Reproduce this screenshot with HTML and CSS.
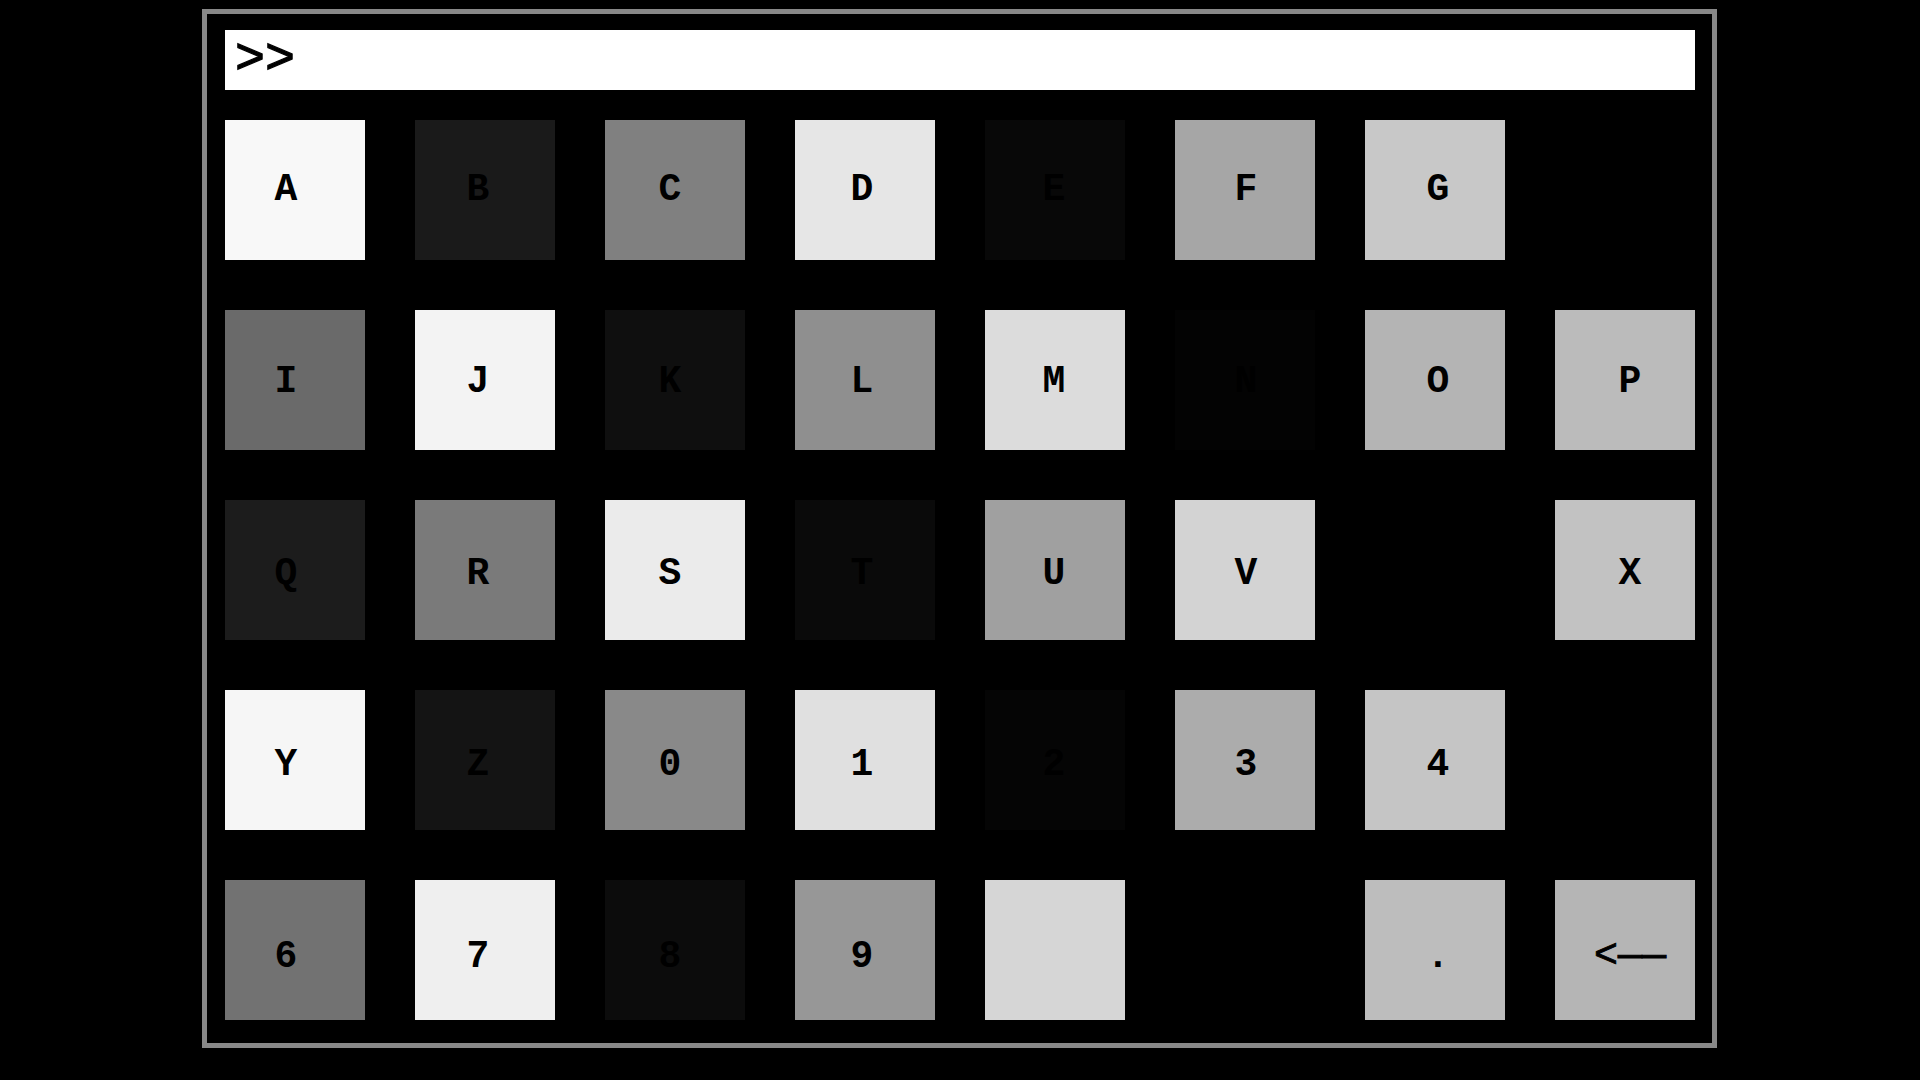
FILE: index.html
```html
<!DOCTYPE html>
<html lang="en">
<head>
<meta charset="utf-8">
<title>Keypad</title>
<link rel="stylesheet" href="styles.css">
</head>
<body>
<main class="frame">
  <div class="display"><span class="prompt">&gt;&gt;</span></div>
  <div class="pad">
    <div class="row">
      <div class="key g-f8"><span class="lbl">A</span></div>
      <div class="key g-1a"><span class="lbl">B</span></div>
      <div class="key g-80"><span class="lbl">C</span></div>
      <div class="key g-e6"><span class="lbl">D</span></div>
      <div class="key g-08"><span class="lbl">E</span></div>
      <div class="key g-a6"><span class="lbl">F</span></div>
      <div class="key g-c8"><span class="lbl">G</span></div>
      <div class="key g-00"><span class="lbl"></span></div>
    </div>
    <div class="row">
      <div class="key g-6a"><span class="lbl">I</span></div>
      <div class="key g-f3"><span class="lbl">J</span></div>
      <div class="key g-0f"><span class="lbl">K</span></div>
      <div class="key g-8f"><span class="lbl">L</span></div>
      <div class="key g-dc"><span class="lbl">M</span></div>
      <div class="key g-03"><span class="lbl">N</span></div>
      <div class="key g-b4"><span class="lbl">O</span></div>
      <div class="key g-bb"><span class="lbl">P</span></div>
    </div>
    <div class="row">
      <div class="key g-1c"><span class="lbl">Q</span></div>
      <div class="key g-7a"><span class="lbl">R</span></div>
      <div class="key g-eb"><span class="lbl">S</span></div>
      <div class="key g-0a"><span class="lbl">T</span></div>
      <div class="key g-a0"><span class="lbl">U</span></div>
      <div class="key g-d3"><span class="lbl">V</span></div>
      <div class="key g-00"><span class="lbl"></span></div>
      <div class="key g-c2"><span class="lbl">X</span></div>
    </div>
    <div class="row">
      <div class="key g-f6"><span class="lbl">Y</span></div>
      <div class="key g-14"><span class="lbl">Z</span></div>
      <div class="key g-89"><span class="lbl">0</span></div>
      <div class="key g-e0"><span class="lbl">1</span></div>
      <div class="key g-05"><span class="lbl">2</span></div>
      <div class="key g-ac"><span class="lbl">3</span></div>
      <div class="key g-c5"><span class="lbl">4</span></div>
      <div class="key g-00"><span class="lbl"></span></div>
    </div>
    <div class="row">
      <div class="key g-72"><span class="lbl">6</span></div>
      <div class="key g-ef"><span class="lbl">7</span></div>
      <div class="key g-0c"><span class="lbl">8</span></div>
      <div class="key g-97"><span class="lbl">9</span></div>
      <div class="key g-d6"><span class="lbl"></span></div>
      <div class="key g-00"><span class="lbl"></span></div>
      <div class="key g-bd"><span class="lbl">.</span></div>
      <div class="key g-b5"><span class="lbl lbl-back">&lt;&mdash;&mdash;</span></div>
    </div>
  </div>
</main>
</body>
</html>
```
FILE: styles.css
```css
html, body {
  margin: 0;
  padding: 0;
  background: #000;
}

body {
  width: 1920px;
  height: 1080px;
  overflow: hidden;
  font-family: "Courier New", "Nimbus Mono PS", "FreeMono", "Liberation Mono", monospace;
}

.frame {
  box-sizing: border-box;
  width: 1515px;
  height: 1039px;
  margin: 9px 0 0 202px;
  border: 5px solid #888;
  padding: 16px 17px 23px 18px;
  display: flex;
  flex-direction: column;
  gap: 30px;
}

.display {
  height: 60px;
  background: #fff;
  display: flex;
  align-items: center;
  padding-left: 10px;
}

.prompt {
  font-size: 50px;
  line-height: 1;
  color: #000;
  -webkit-text-stroke: 1.2px #000;
  position: relative;
  top: 0;
}

.pad {
  display: flex;
  flex-direction: column;
  gap: 50px;
}

.row {
  display: flex;
  gap: 50px;
  --dy: 0px;
}

.key {
  width: 140px;
  height: 140px;
  flex: none;
  display: flex;
  align-items: center;
  justify-content: center;
  --dx: 0px;
}

.lbl {
  font-size: 38px;
  font-weight: bold;
  line-height: 1;
  color: #000;
  transform: translate(var(--dx), var(--dy));
}

.lbl-back {
  font-weight: normal;
  font-size: 40px;
  -webkit-text-stroke: 0.9px #000;
}

/* label drift: labels sit on a 192px pitch while keys sit on 190px */
.row:nth-child(1) { --dy: 0px; }
.row:nth-child(2) { --dy: 2px; }
.row:nth-child(3) { --dy: 4px; }
.row:nth-child(4) { --dy: 5px; }
.row:nth-child(5) { --dy: 7px; }

.key:nth-child(1) { --dx: -9px; }
.key:nth-child(2) { --dx: -7px; }
.key:nth-child(3) { --dx: -5px; }
.key:nth-child(4) { --dx: -3px; }
.key:nth-child(5) { --dx: -1px; }
.key:nth-child(6) { --dx: 1px; }
.key:nth-child(7) { --dx: 3px; }
.key:nth-child(8) { --dx: 5px; }

/* key shades */
.g-00 { background: #000; }
.g-03 { background: #030303; }
.g-05 { background: #050505; }
.g-08 { background: #080808; }
.g-0a { background: #0a0a0a; }
.g-0c { background: #0c0c0c; }
.g-0f { background: #0f0f0f; }
.g-14 { background: #141414; }
.g-1a { background: #1a1a1a; }
.g-1c { background: #1c1c1c; }
.g-6a { background: #6a6a6a; }
.g-72 { background: #727272; }
.g-7a { background: #7a7a7a; }
.g-80 { background: #808080; }
.g-89 { background: #898989; }
.g-8f { background: #8f8f8f; }
.g-97 { background: #979797; }
.g-a0 { background: #a0a0a0; }
.g-a6 { background: #a6a6a6; }
.g-ac { background: #acacac; }
.g-b4 { background: #b4b4b4; }
.g-b5 { background: #b5b5b5; }
.g-bb { background: #bbbbbb; }
.g-bd { background: #bdbdbd; }
.g-c2 { background: #c2c2c2; }
.g-c5 { background: #c5c5c5; }
.g-c8 { background: #c8c8c8; }
.g-d3 { background: #d3d3d3; }
.g-d6 { background: #d6d6d6; }
.g-dc { background: #dcdcdc; }
.g-e0 { background: #e0e0e0; }
.g-e6 { background: #e6e6e6; }
.g-eb { background: #ebebeb; }
.g-ef { background: #efefef; }
.g-f3 { background: #f3f3f3; }
.g-f6 { background: #f6f6f6; }
.g-f8 { background: #f8f8f8; }
```
